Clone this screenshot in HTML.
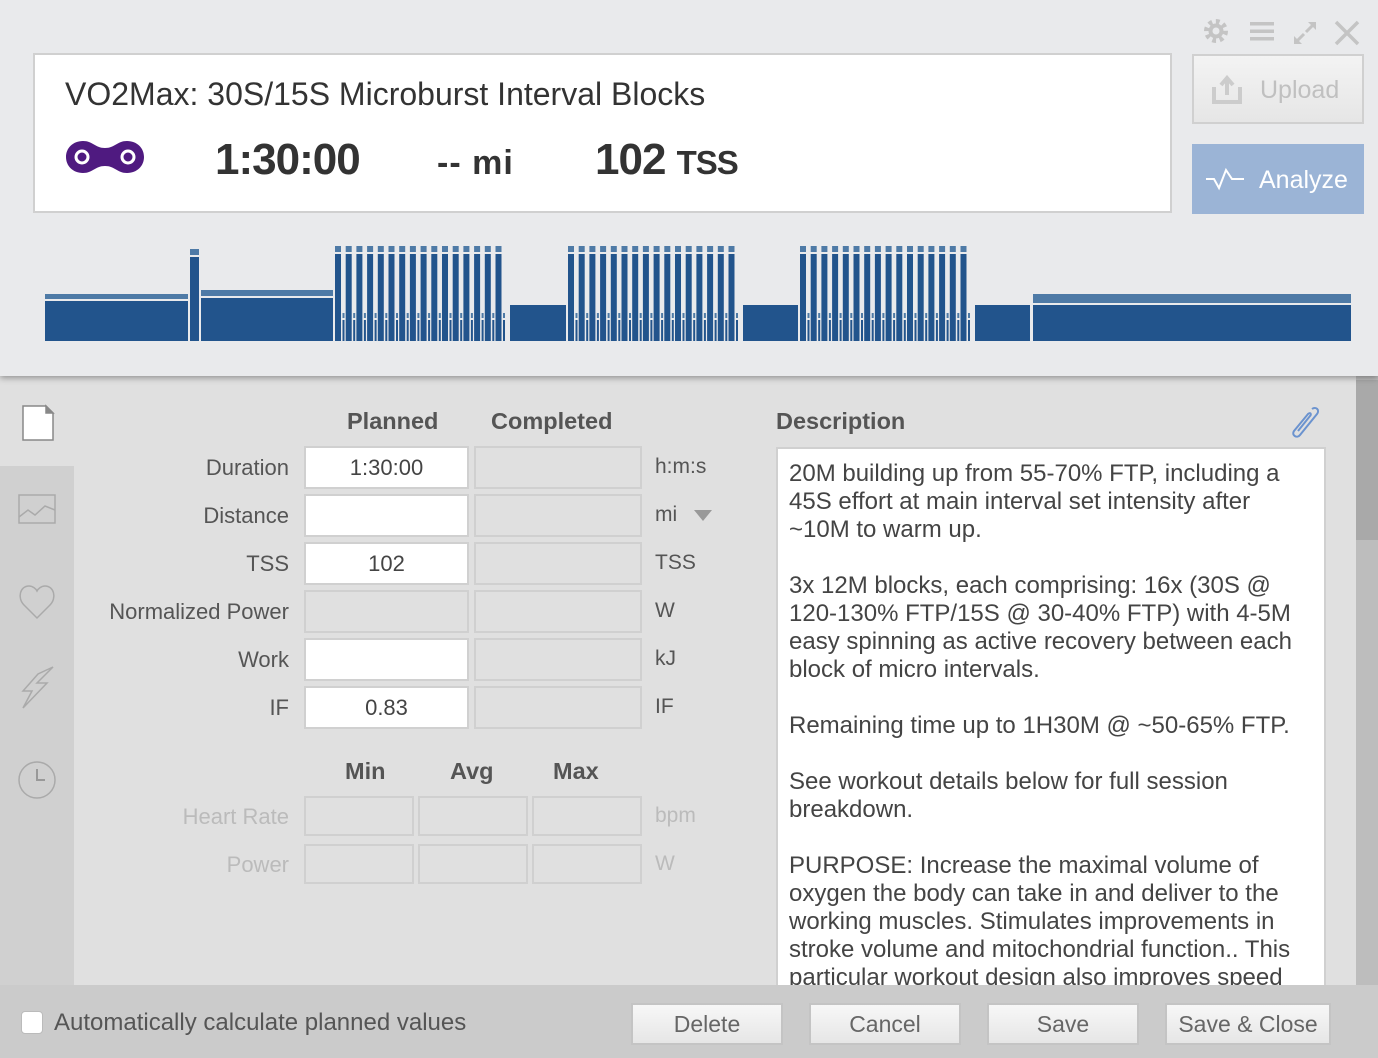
<!DOCTYPE html>
<html><head><meta charset="utf-8"><style>
*{margin:0;padding:0;box-sizing:border-box}
body{width:1378px;height:1058px;position:relative;overflow:hidden;font-family:"Liberation Sans",sans-serif;background:#e0e0e0}
.abs{position:absolute}
#top{left:0;top:0;width:1378px;height:376px;background:#e9eaec;box-shadow:0 2px 6px rgba(0,0,0,.35);z-index:2}
.card{left:33px;top:53px;width:1139px;height:160px;background:#fff;border:2px solid #d0d0d0}
.lbl{color:#555;font-size:22px;text-align:right;width:220px;left:69px}
.in{width:165px;height:43px;border:2px solid #d0d0d0;background:#fff;font-size:22px;color:#444;text-align:center;line-height:39px}
.gr{background:#e0e0e0}
.unit{left:655px;font-size:21px;color:#555}
.hd{font-size:23.5px;font-weight:bold;color:#555}
.btn{top:1003px;height:42px;border:2px solid #c4c4c4;background:linear-gradient(#f7f7f7,#e6e6e6);font-size:23px;color:#666;text-align:center;line-height:38px}
.desc{left:789px;top:460px;width:515px;font-size:24px;line-height:28px;color:#444}
.desc p{margin-bottom:28px}
</style></head><body>
<div id="top" class="abs">
 <div class="abs card">
  <div class="abs" style="left:30px;top:21px;font-size:32px;color:#333">VO2Max: 30S/15S Microburst Interval Blocks</div>
  <svg class="abs" style="left:30px;top:84px" width="80" height="36"><path d="M18 2 C28 2 30 9 40 9 C50 9 52 2 62 2 C72 2 79 9 79 18 C79 27 72 34 62 34 C52 34 50 27 40 27 C30 27 28 34 18 34 C8 34 1 27 1 18 C1 9 8 2 18 2Z" fill="#4f1a80"/><circle cx="17" cy="18" r="6" fill="none" stroke="#fff" stroke-width="3"/><circle cx="63" cy="18" r="6" fill="none" stroke="#fff" stroke-width="3"/></svg>
  <div class="abs" style="left:180px;top:80px;font-size:44px;font-weight:bold;color:#333;letter-spacing:-1px">1:30:00</div>
  <div class="abs" style="left:402px;top:89px;font-size:34px;font-weight:bold;color:#333;letter-spacing:1px">-- mi</div>
  <div class="abs" style="left:560px;top:80px;font-size:44px;font-weight:bold;color:#333;letter-spacing:-1px">102 <span style="font-size:33px">TSS</span></div>
 </div>
 <svg class="abs" style="left:1200px;top:17px" width="165" height="30" fill="#c4c4c4" stroke="#c4c4c4">
  <circle cx="16" cy="14" r="9" stroke-width="6" stroke-dasharray="3.5 3.5" fill="none"/><circle cx="16" cy="14" r="7" fill="#c4c4c4"/><circle cx="16" cy="14" r="3.5" fill="#e9eaec" stroke="none"/>
  <rect x="50" y="5" width="24" height="3.5" stroke="none"/><rect x="50" y="12.5" width="24" height="3.5" stroke="none"/><rect x="50" y="20" width="24" height="3.5" stroke="none"/>
  <path d="M95 26 L104 17 M106 15 L115 6" stroke-width="3"/><path d="M94 27 L94 19 L102 27Z M116 5 L116 13 L108 5Z" stroke="none"/>
  <path d="M136 5 L158 27 M158 5 L136 27" stroke-width="3.5"/>
 </svg>
 <div class="abs" style="left:1192px;top:54px;width:172px;height:70px;border:2px solid #d0d0d0;background:linear-gradient(#f3f3f3,#e6e6e6);color:#c0c0c0;font-size:25px;line-height:68px;padding-left:66px">Upload</div>
 <svg class="abs" style="left:1211px;top:75px" width="32" height="30" fill="none" stroke="#ccc" stroke-width="4"><path d="M3 12 V27 H29 V12"/><path d="M16 20 V5 M10 10 L16 3 L22 10" stroke-width="4"/></svg>
 <div class="abs" style="left:1192px;top:144px;width:172px;height:70px;background:#9bb4d6;color:#fff;font-size:25px;line-height:72px;padding-left:67px">Analyze</div>
 <svg class="abs" style="left:1206px;top:166px" width="40" height="26" fill="none" stroke="#fff" stroke-width="2"><path d="M0 13 H8 L13 22 L20 4 L26 13 H38"/></svg>
 <svg id="ch" class="abs" style="left:0;top:0" width="1378" height="376"></svg>
</div>
<div class="abs" style="left:0;top:466px;width:74px;height:520px;background:#d0d0d0"></div>
<div class="abs" style="left:1356px;top:376px;width:22px;height:610px;background:#bdbdbd"></div>
<div class="abs" style="left:1356px;top:380px;width:22px;height:160px;background:#a9a9a9"></div>
<svg class="abs" style="left:15px;top:400px" width="45" height="400" fill="none" stroke="#aaa" stroke-width="1.5">
 <path d="M8 6 H31 L38 13 V40 H8Z" fill="#fff" stroke="#888"/><path d="M31 6 V13 H38Z" fill="#888" stroke="#888"/>
 <rect x="4" y="95" width="36" height="28"/><path d="M4 117 L13 110 L20 115 L30 106 L40 110"/>
 <path d="M22 218 L9 205 C2 198 5 186 14 186 C18 186 21 189 22 191 C23 189 26 186 30 186 C39 186 42 198 35 205Z"/>
 <path d="M38 267 L22 283 L32 283 L8 308 L17 291 L8 291 L23 274 Z"/>
 <circle cx="22" cy="380" r="18"/><path d="M22 369 V380 H30" stroke="#999" stroke-width="2"/>
</svg>
<div class="abs hd" style="left:347px;top:408px">Planned</div>
<div class="abs hd" style="left:491px;top:408px">Completed</div>
<div class="abs hd" style="left:776px;top:408px">Description</div>
<svg class="abs" style="left:1288px;top:405px" width="34" height="36" fill="none" stroke="#6b93cf" stroke-width="2"><path d="M24 4 C28 1 32 5 29 9 L12 30 C9 34 3 30 6 26 L20 9 C22 7 24 9 22 11 L10 26"/></svg>
<div class="abs lbl" style="top:455px">Duration</div>
<div class="abs lbl" style="top:503px">Distance</div>
<div class="abs lbl" style="top:551px">TSS</div>
<div class="abs lbl" style="top:599px">Normalized Power</div>
<div class="abs lbl" style="top:647px">Work</div>
<div class="abs lbl" style="top:695px">IF</div>
<div class="abs in" style="left:304px;top:446px">1:30:00</div>
<div class="abs in" style="left:304px;top:494px"></div>
<div class="abs in" style="left:304px;top:542px">102</div>
<div class="abs in gr" style="left:304px;top:590px"></div>
<div class="abs in" style="left:304px;top:638px"></div>
<div class="abs in" style="left:304px;top:686px">0.83</div>
<div class="abs in gr" style="left:474px;top:446px;width:168px"></div>
<div class="abs in gr" style="left:474px;top:494px;width:168px"></div>
<div class="abs in gr" style="left:474px;top:542px;width:168px"></div>
<div class="abs in gr" style="left:474px;top:590px;width:168px"></div>
<div class="abs in gr" style="left:474px;top:638px;width:168px"></div>
<div class="abs in gr" style="left:474px;top:686px;width:168px"></div>
<div class="abs unit" style="top:455px">h:m:s</div>
<div class="abs unit" style="top:503px">mi</div>
<div class="abs" style="left:694px;top:510px;border-left:9px solid transparent;border-right:9px solid transparent;border-top:11px solid #999"></div>
<div class="abs unit" style="top:551px">TSS</div>
<div class="abs unit" style="top:599px">W</div>
<div class="abs unit" style="top:647px">kJ</div>
<div class="abs unit" style="top:695px">IF</div>
<div class="abs hd" style="left:345px;top:758px">Min</div>
<div class="abs hd" style="left:450px;top:758px">Avg</div>
<div class="abs hd" style="left:553px;top:758px">Max</div>
<div class="abs lbl" style="top:804px;color:#bbb">Heart Rate</div>
<div class="abs lbl" style="top:852px;color:#bbb">Power</div>
<div class="abs in gr" style="left:304px;top:796px;width:110px;height:40px"></div>
<div class="abs in gr" style="left:418px;top:796px;width:110px;height:40px"></div>
<div class="abs in gr" style="left:532px;top:796px;width:110px;height:40px"></div>
<div class="abs in gr" style="left:304px;top:844px;width:110px;height:40px"></div>
<div class="abs in gr" style="left:418px;top:844px;width:110px;height:40px"></div>
<div class="abs in gr" style="left:532px;top:844px;width:110px;height:40px"></div>
<div class="abs unit" style="top:804px;color:#bbb">bpm</div>
<div class="abs unit" style="top:852px;color:#bbb">W</div>
<div class="abs" style="left:776px;top:447px;width:550px;height:560px;background:#fff;border:2px solid #d0d0d0;overflow:hidden"></div>
<div class="abs desc">
<p>20M building up from 55-70% FTP, including a 45S effort at main interval set intensity after ~10M to warm up.</p>
<p>3x 12M blocks, each comprising: 16x (30S @ 120-130% FTP/15S @ 30-40% FTP) with 4-5M easy spinning as active recovery between each block of micro intervals.</p>
<p>Remaining time up to 1H30M @ ~50-65% FTP.</p>
<p>See workout details below for full session breakdown.</p>
<p>PURPOSE: Increase the maximal volume of oxygen the body can take in and deliver to the working muscles. Stimulates improvements in stroke volume and mitochondrial function.. This particular workout design also improves speed</p>
</div>
<div class="abs" style="left:0;top:985px;width:1378px;height:73px;background:#cbcbcb"></div>
<div class="abs" style="left:21px;top:1011px;width:22px;height:23px;border-radius:4px;background:#fff;border:1px solid #bbb"></div>
<div class="abs" style="left:54px;top:1009px;font-size:24px;color:#555">Automatically calculate planned values</div>
<div class="abs btn" style="left:631px;width:152px">Delete</div>
<div class="abs btn" style="left:809px;width:152px">Cancel</div>
<div class="abs btn" style="left:987px;width:152px">Save</div>
<div class="abs btn" style="left:1165px;width:166px">Save &amp; Close</div>
<script>
var s='',D='#22548c',L='#4e7aa6';
function seg(x,w,ct,cb,bt){s+='<rect x="'+x+'" y="'+ct+'" width="'+w+'" height="'+(cb-ct)+'" fill="'+L+'"/><rect x="'+x+'" y="'+bt+'" width="'+w+'" height="'+(341-bt)+'" fill="'+D+'"/>';}
function dk(x,w,t){s+='<rect x="'+x+'" y="'+t+'" width="'+w+'" height="'+(341-t)+'" fill="'+D+'"/>';}
seg(45,143,294,299,301);seg(190,9,249,255,257);seg(201,132,290,296,298);
[335,568,800].forEach(function(b){for(var i=0;i<16;i++){var x=b+i*10.7;seg(x,6,246,252,254);seg(x+7.5,2,313,318,320);}});
dk(510,56,305);dk(743,55,305);dk(975,55,305);
seg(1033,318,294,303,305);
document.getElementById('ch').innerHTML=s;
</script>
</body></html>
